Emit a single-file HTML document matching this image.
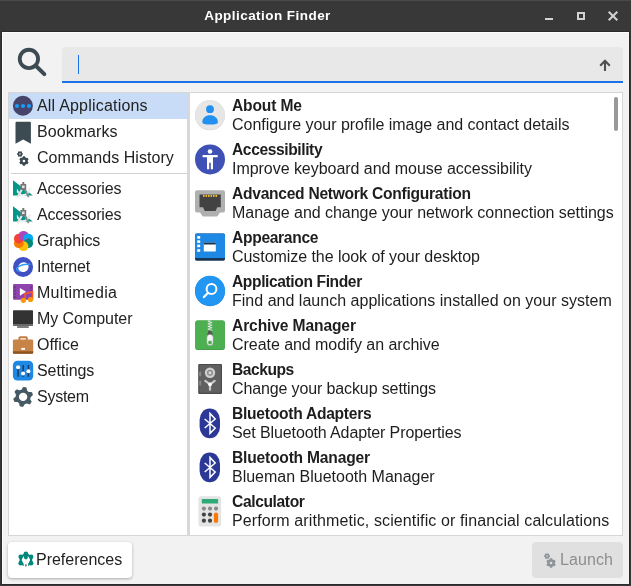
<!DOCTYPE html>
<html><head><meta charset="utf-8">
<style>
*{box-sizing:border-box;margin:0;padding:0}
html,body{width:631px;height:586px;overflow:hidden;background:#383838;font-family:"Liberation Sans",sans-serif;}
#win{position:absolute;left:0;top:0;width:631px;height:586px;background:#383838;box-shadow:inset 0 1px 0 #4a4a4a}
#title{will-change:transform;position:absolute;left:0;top:0;width:535px;height:32px;line-height:31px;text-align:center;color:#fff;font-weight:bold;font-size:13.5px;letter-spacing:0.45px}
#content{position:absolute;left:2px;top:32px;width:627px;height:552px;background:#f2f2f2;outline:1px solid #2b2b2b;box-shadow:inset 1px 1px 0 #fdfdfd}
#entry{position:absolute;left:60px;top:15px;width:561px;height:36px;background:#e8e8e8;border-bottom:2px solid #1a73e8;border-radius:4px 4px 0 0}
#caret{position:absolute;left:16px;top:8px;width:1px;height:19px;background:#1a73e8}
#left{position:absolute;left:6px;top:60px;width:179px;height:444px;background:#fff;border:1px solid #d6d6d6;border-right:0}
#psep{position:absolute;left:185px;top:60px;width:3px;height:444px;background:#d8d8d8}
#right{position:absolute;left:188px;top:60px;width:433px;height:444px;background:#fff;border:1px solid #d6d6d6;border-left:0;overflow:hidden}
.cat{will-change:transform;position:absolute;left:0;width:178px;height:26px;line-height:26px;font-size:16px;color:#222;padding-left:28px;white-space:nowrap}
.cat.sel{background:#c8dcf8}
.cat svg{position:absolute;left:3px;top:2px;width:22px;height:22px}
.sep{position:absolute;left:2px;width:176px;top:80px;height:1px;background:#d2d2d2}
.app{will-change:transform;position:absolute;left:0;width:420px;height:44px;white-space:nowrap;color:#1e1e1e}
.app b{position:absolute;left:42px;top:3px;font-size:15.6px;line-height:19px}
.app span{position:absolute;left:42px;top:22px;font-size:16px;line-height:19px}
.app svg{position:absolute;left:4px;top:5px;width:32px;height:32px}
#sb{position:absolute;left:424px;top:4px;width:4px;height:34px;border-radius:2px;background:#999}
.btn{will-change:transform;position:absolute;top:510px;height:36px;border-radius:4px;font-size:16px;line-height:36px;white-space:nowrap}
#pref{left:6px;width:124px;background:#fff;box-shadow:0 1px 3px rgba(0,0,0,.3);color:#222;padding-left:28px}
#launch{left:530px;width:91px;background:#e0e0e0;color:#8e8e8e;padding-left:28px}
</style></head><body>
<div id="win">
<div id="title">Application Finder</div>
<svg style="position:absolute;left:540px;top:0" width="91" height="32" viewBox="540 0 91 32"><rect x="545" y="18" width="8" height="2" fill="#d2d2d2"/><rect x="578" y="13" width="6" height="6" fill="none" stroke="#d2d2d2" stroke-width="2"/><path d="M608.7 11.7l8.6 8.6M617.3 11.7l-8.6 8.6" stroke="#d2d2d2" stroke-width="2" fill="none"/></svg>
<div id="content">
<svg style="position:absolute;left:14px;top:14px" width="32" height="32" viewBox="16 46 32 32"><circle cx="28.9" cy="58.9" r="9.15" fill="none" stroke="#3c4a52" stroke-width="3.8"/><path d="M35.8 65.8l8.5 8.3" stroke="#3c4a52" stroke-width="4" stroke-linecap="round"/></svg>
<div id="entry"><div id="caret"></div>
<svg style="position:absolute;left:536px;top:9px" width="16" height="18" viewBox="598 56 16 18"><path d="M605 70.9V60.8M600.2 65.7L605 60.7L609.8 65.7" fill="none" stroke="#505050" stroke-width="2.1"/></svg>
</div>
<div id="left">
<div class="cat sel" id="c0" style="top:0;letter-spacing:0.198px">All Applications</div>
<div class="cat" id="c1" style="top:26px;letter-spacing:0.059px">Bookmarks</div>
<div class="cat" id="c2" style="top:52px;letter-spacing:0.050px">Commands History</div>
<div class="sep"></div>
<div class="cat" id="c3" style="top:83px;letter-spacing:-0.185px">Accessories</div>
<div class="cat" id="c4" style="top:109px;letter-spacing:-0.185px">Accessories</div>
<div class="cat" id="c5" style="top:135px;letter-spacing:-0.105px">Graphics</div>
<div class="cat" id="c6" style="top:161px;letter-spacing:-0.152px">Internet</div>
<div class="cat" id="c7" style="top:187px;letter-spacing:0.293px">Multimedia</div>
<div class="cat" id="c8" style="top:213px;letter-spacing:-0.054px">My Computer</div>
<div class="cat" id="c9" style="top:239px;letter-spacing:0.097px">Office</div>
<div class="cat" id="c10" style="top:265px;letter-spacing:-0.074px">Settings</div>
<div class="cat" id="c11" style="top:291px;letter-spacing:-0.249px">System</div>
</div>
<div id="psep"></div>
<div id="right">
<div class="app" style="top:0"><b id="b0" style="letter-spacing:-0.147px">About Me</b><span id="s0" style="letter-spacing:-0.031px">Configure your profile image and contact details</span></div>
<div class="app" style="top:44px"><b id="b1" style="letter-spacing:-0.396px">Accessibility</b><span id="s1" style="letter-spacing:-0.041px">Improve keyboard and mouse accessibility</span></div>
<div class="app" style="top:88px"><b id="b2" style="letter-spacing:-0.273px">Advanced Network Configuration</b><span id="s2" style="letter-spacing:-0.034px">Manage and change your network connection settings</span></div>
<div class="app" style="top:132px"><b id="b3" style="letter-spacing:-0.309px">Appearance</b><span id="s3" style="letter-spacing:-0.058px">Customize the look of your desktop</span></div>
<div class="app" style="top:176px"><b id="b4" style="letter-spacing:-0.393px">Application Finder</b><span id="s4" style="letter-spacing:0.017px">Find and launch applications installed on your system</span></div>
<div class="app" style="top:220px"><b id="b5" style="letter-spacing:-0.120px">Archive Manager</b><span id="s5" style="letter-spacing:-0.049px">Create and modify an archive</span></div>
<div class="app" style="top:264px"><b id="b6" style="letter-spacing:-0.468px">Backups</b><span id="s6" style="letter-spacing:-0.125px">Change your backup settings</span></div>
<div class="app" style="top:308px"><b id="b7" style="letter-spacing:-0.259px">Bluetooth Adapters</b><span id="s7" style="letter-spacing:-0.114px">Set Bluetooth Adapter Properties</span></div>
<div class="app" style="top:352px"><b id="b8" style="letter-spacing:-0.201px">Bluetooth Manager</b><span id="s8" style="letter-spacing:-0.004px">Blueman Bluetooth Manager</span></div>
<div class="app" style="top:396px"><b id="b9" style="letter-spacing:-0.373px">Calculator</b><span id="s9" style="letter-spacing:0.116px">Perform arithmetic, scientific or financial calculations</span></div>
<div id="sb"></div>
</div>
<div class="btn" id="pref" style="letter-spacing:-0.008px">Preferences</div>
<div class="btn" id="launch" style="letter-spacing:0.100px">Launch</div>
</div>
<svg id="icons" style="position:absolute;left:0;top:0;pointer-events:none" width="631" height="586" viewBox="0 0 631 586">
<!--L-->
<circle cx="22.9" cy="105.8" r="10" fill="#46446a"/><circle cx="17" cy="106" r="2.1" fill="#1a9cf5"/><circle cx="23" cy="106" r="2.1" fill="#1a9cf5"/><circle cx="29" cy="106" r="2.1" fill="#1a9cf5"/>
<path fill="#3c4a52" d="M15.5 122.7a1 1 0 0 1 1-1h13.4a1 1 0 0 1 1 1V143.7L23.2 139.6L15.5 143.7Z"/>
<path fill-rule="evenodd" fill="#3c4a52" d="M22.14 153.16 L22.85 153.22 L22.85 154.78 L22.14 154.84 L21.78 155.48 L22.07 156.12 L20.73 156.90 L20.32 156.32 L19.58 156.32 L19.17 156.90 L17.83 156.12 L18.12 155.48 L17.76 154.84 L17.05 154.78 L17.05 153.22 L17.76 153.16 L18.12 152.52 L17.83 151.88 L19.17 151.10 L19.58 151.68 L20.32 151.68 L20.73 151.10 L22.07 151.88 L21.78 152.52Z M19.15 154.00 a0.80 0.80 0 1 0 1.60 0 a0.80 0.80 0 1 0 -1.60 0Z"/><path fill-rule="evenodd" fill="#3c4a52" d="M25.17 164.71 L25.01 165.68 L22.89 165.68 L22.73 164.71 L21.31 163.89 L20.38 164.23 L19.32 162.40 L20.09 161.77 L20.09 160.13 L19.32 159.50 L20.38 157.67 L21.31 158.01 L22.73 157.19 L22.89 156.22 L25.01 156.22 L25.17 157.19 L26.59 158.01 L27.52 157.67 L28.58 159.50 L27.81 160.13 L27.81 161.77 L28.58 162.40 L27.52 164.23 L26.59 163.89Z M22.65 160.95 a1.30 1.30 0 1 0 2.60 0 a1.30 1.30 0 1 0 -2.60 0Z"/>
<path fill="#009688" fill-rule="evenodd" d="M13 180.2 V195.6 H32.8Z M16.9 188.6 V192.8 H19.6Z"/><path d="M18 193.7 Q23 196.9 28.2 193.3" fill="none" stroke="#f2f2f2" stroke-width="1.9"/><path d="M21.8 189.5 L17.6 197.4" stroke="#e6e6e6" stroke-width="2.1"/><path d="M30.6 188.2 L26.4 194.2" stroke="#ececec" stroke-width="2"/><path d="M24.8 189.5 L28.6 197.2" stroke="#8a8a8a" stroke-width="1.7"/><rect x="22.3" y="182.0" width="2" height="2.4" fill="#757575"/><rect x="20.4" y="184.0" width="5.8" height="5.9" fill="#757575"/><rect x="22" y="185.5" width="2.6" height="2.6" fill="#e0e0e0"/>
<path fill="#009688" fill-rule="evenodd" d="M13 206.2 V221.6 H32.8Z M16.9 214.6 V218.8 H19.6Z"/><path d="M18 219.7 Q23 222.9 28.2 219.3" fill="none" stroke="#f2f2f2" stroke-width="1.9"/><path d="M21.8 215.5 L17.6 223.4" stroke="#e6e6e6" stroke-width="2.1"/><path d="M30.6 214.2 L26.4 220.2" stroke="#ececec" stroke-width="2"/><path d="M24.8 215.5 L28.6 223.2" stroke="#8a8a8a" stroke-width="1.7"/><rect x="22.3" y="208.0" width="2" height="2.4" fill="#757575"/><rect x="20.4" y="210.0" width="5.8" height="5.9" fill="#757575"/><rect x="22" y="211.5" width="2.6" height="2.6" fill="#e0e0e0"/>
<circle cx="28.15" cy="238.60" r="4.9" fill="#03a9f4"/><circle cx="28.15" cy="243.20" r="4.9" fill="#00897b"/><circle cx="23.50" cy="246.20" r="4.9" fill="#ffc107"/><circle cx="18.85" cy="243.20" r="4.9" fill="#f57c00"/><circle cx="18.85" cy="238.60" r="4.9" fill="#f44336"/><circle cx="23.50" cy="235.80" r="4.9" fill="#ab47bc"/><clipPath id="fl"><path clip-rule="evenodd" d="M10 228h28v28h-28z M23.25 243.20 a4.9 4.9 0 1 0 9.8 0 a4.9 4.9 0 1 0 -9.8 0z"/></clipPath><circle cx="28.15" cy="238.6" r="4.9" fill="#03a9f4" clip-path="url(#fl)"/>
<circle cx="23.05" cy="267" r="10.05" fill="#3f50c4"/><ellipse cx="23.4" cy="267.2" rx="5.3" ry="4.8" transform="rotate(-25 23.4 267.2)" fill="#fff"/><path d="M30 264.3 Q22.4 263.6 18 267 Q15.6 269 17.2 270.1 Q18.4 270.9 19.6 271.4" fill="none" stroke="#2f9bf2" stroke-width="1.4" stroke-linecap="round"/>
<rect x="13" y="284" width="20" height="15.8" rx="1.2" fill="#8e44ad"/><rect x="14" y="286.6" width="1.8" height="1.8" rx="0.4" fill="#6c3483"/><rect x="14" y="289.8" width="1.8" height="1.8" rx="0.4" fill="#6c3483"/><rect x="14" y="293.0" width="1.8" height="1.8" rx="0.4" fill="#6c3483"/><rect x="14" y="296.2" width="1.8" height="1.8" rx="0.4" fill="#6c3483"/><rect x="30.1" y="286.6" width="1.8" height="1.8" rx="0.4" fill="#6c3483"/><rect x="30.1" y="289.8" width="1.8" height="1.8" rx="0.4" fill="#6c3483"/><path d="M19.9 288V295.7L26.1 291.8Z" fill="#fff"/><path d="M25.1 300V293.9L32.5 291.6V299.4" fill="none" stroke="#ff5722" stroke-width="1.6"/><circle cx="23.4" cy="300.3" r="2.6" fill="#ff9800"/><circle cx="30.5" cy="299.5" r="2.6" fill="#ff9800"/>
<rect x="13" y="310.3" width="20" height="14.2" rx="0.8" fill="#333"/><rect x="13" y="324.3" width="20" height="1.6" fill="#5a5a5a"/><rect x="17" y="325.9" width="11.8" height="2" rx="0.5" fill="#808080"/>
<rect x="19.4" y="337.2" width="7.4" height="4" rx="0.8" fill="none" stroke="#c17c40" stroke-width="1.9"/><rect x="12.9" y="339.5" width="20.3" height="14.3" rx="1.2" fill="#c88446"/><path d="M12.9 351.2h20.3v1.4a1.2 1.2 0 0 1-1.2 1.2h-17.9a1.2 1.2 0 0 1-1.2-1.2z" fill="#8d5524"/><rect x="21.3" y="347.9" width="3.7" height="1.9" fill="#fff"/>
<rect x="12.9" y="360.7" width="20.3" height="19.9" rx="4.5" fill="#1e88e5"/><rect x="17.30" y="365" width="1.5" height="11.8" fill="#1b3a5e"/><rect x="22.35" y="365" width="1.5" height="11.8" fill="#1b3a5e"/><rect x="27.65" y="365" width="1.5" height="11.8" fill="#1b3a5e"/><circle cx="18.05" cy="367.2" r="2" fill="#fff"/><circle cx="23.1" cy="373.4" r="2" fill="#fff"/><circle cx="28.4" cy="371.2" r="2" fill="#fff"/>
<path stroke="#455a64" stroke-width="2.2" stroke-linejoin="round" fill-rule="evenodd" fill="#455a64" d="M22.33 390.45 L23.72 388.02 L25.55 388.34 L26.03 391.10 L28.30 393.01 L31.10 393.00 L31.74 394.75 L29.59 396.54 L29.07 399.46 L30.48 401.88 L29.28 403.30 L26.66 402.34 L23.87 403.35 L22.48 405.78 L20.65 405.46 L20.17 402.70 L17.90 400.79 L15.10 400.80 L14.46 399.05 L16.61 397.26 L17.13 394.34 L15.72 391.92 L16.92 390.50 L19.54 391.46Z M17.80 396.90 a5.30 5.30 0 1 0 10.60 0 a5.30 5.30 0 1 0 -10.60 0Z"/>
<!--R-->
<circle cx="210" cy="115.3" r="15" fill="#d0d0d0"/><circle cx="210" cy="115" r="15" fill="#e6e6e6"/><circle cx="210" cy="109.2" r="3.9" fill="#2190f0"/><path d="M202.3 122.2c0-4.2 3.4-6.9 7.7-6.9s7.9 2.7 7.9 6.9c0 1.6-3 2.4-7.8 2.4s-7.8-.8-7.8-2.4z" fill="#2190f0"/>
<circle cx="210" cy="159.4" r="15" fill="#3f51b5"/><circle cx="210" cy="151.5" r="2.3" fill="#fff"/><path d="M202.6 155h15.1v2.3h-4.7v12h-2.2v-6.6h-1.6v6.6h-2.2v-12h-4.4z" fill="#fff"/>
<path d="M197 190.2h26a2 2 0 0 1 2 2v18.3a2 2 0 0 1-2 2h-3l-2.2 3.2a1.6 1.6 0 0 1-1.3.7h-13a1.6 1.6 0 0 1-1.3-.7l-2.2-3.2h-3a2 2 0 0 1-2-2v-18.3a2 2 0 0 1 2-2z" fill="#b0b0b0"/><path d="M199.5 194.5h21.3v12.7h-3.6l-1.6 3.8h-10.9l-1.6-3.8h-3.6z" fill="#424242"/><rect x="203.0" y="194.9" width="1.6" height="1.9" fill="#fbc02d"/><rect x="205.5" y="194.9" width="1.6" height="1.9" fill="#fbc02d"/><rect x="208.0" y="194.9" width="1.6" height="1.9" fill="#fbc02d"/><rect x="210.5" y="194.9" width="1.6" height="1.9" fill="#fbc02d"/><rect x="213.0" y="194.9" width="1.6" height="1.9" fill="#fbc02d"/><rect x="215.5" y="194.9" width="1.6" height="1.9" fill="#fbc02d"/>
<rect x="195" y="233.6" width="30" height="27.1" rx="1.6" fill="#1a3553"/><path d="M196.6 233.6h26.8a1.6 1.6 0 0 1 1.6 1.6v22.7h-30v-22.7a1.6 1.6 0 0 1 1.6-1.6z" fill="#1e88e5"/><rect x="197.2" y="236.1" width="3" height="2.6" fill="#fff"/><rect x="197.2" y="240.3" width="3" height="2.6" fill="#fff"/><rect x="197.2" y="244.6" width="3" height="2.6" fill="#fff"/><rect x="197.2" y="249.2" width="3" height="2.6" fill="#fff"/><rect x="203.8" y="242.5" width="12" height="9" rx="0.6" fill="#fff"/><path d="M203.8 243.1a.6.6 0 0 1 .6-.6h10.8a.6.6 0 0 1 .6.6v1.3h-12z" fill="#1a3553"/>
<circle cx="210" cy="291.2" r="15" fill="#1976d2"/><circle cx="210" cy="290.8" r="15" fill="#2196f3"/><circle cx="211.5" cy="289" r="4.9" fill="none" stroke="#fff" stroke-width="2"/><path d="M207.9 292.9L203.9 297.1" stroke="#fff" stroke-width="2.2" stroke-linecap="round"/>
<rect x="195.3" y="320.6" width="29.5" height="29.4" rx="2.2" fill="#3d9141"/><rect x="195.3" y="320.5" width="29.5" height="28.9" rx="2.2" fill="#4caf50"/><rect x="207.8" y="320.6" width="2.6" height="1.3" fill="#f0f0f0"/><rect x="209.6" y="321.9" width="2.6" height="1.3" fill="#e0e0e0"/><rect x="207.8" y="323.2" width="2.6" height="1.3" fill="#f0f0f0"/><rect x="209.6" y="324.5" width="2.6" height="1.3" fill="#e0e0e0"/><rect x="207.8" y="325.8" width="2.6" height="1.3" fill="#f0f0f0"/><rect x="209.6" y="327.1" width="2.6" height="1.3" fill="#e0e0e0"/><rect x="207.8" y="328.4" width="2.6" height="1.3" fill="#f0f0f0"/><rect x="209.6" y="329.7" width="2.6" height="1.3" fill="#e0e0e0"/><path d="M208.6 330.6h2.8l1.6 4.6h-6z" fill="#555"/><rect x="206.9" y="334.4" width="6.2" height="11.2" rx="3" fill="#f5f5f5" stroke="#9e9e9e" stroke-width="0.6"/><circle cx="210" cy="342.5" r="1.9" fill="#4caf50"/>
<rect x="198.2" y="363.9" width="23.8" height="30" rx="1.2" fill="#4a4a4a"/><rect x="199.4" y="365.1" width="21.4" height="27.6" rx="0.6" fill="#606060"/><rect x="199.2" y="371.6" width="1.9" height="4.6" rx="0.5" fill="#8a8a8a"/><rect x="199.2" y="380.8" width="1.9" height="4.6" rx="0.5" fill="#8a8a8a"/><circle cx="210" cy="372.8" r="5.2" fill="#cfcfcf"/><circle cx="210" cy="372.8" r="3" fill="#888"/><rect x="208.6" y="371.4" width="2.8" height="2.8" fill="#d8d8d8"/><path d="M210 384.4L205.3 380.9M210 384.4L214.7 380.9M210 384.4V389.8" stroke="#c8c8c8" stroke-width="2.2" stroke-linecap="round"/><circle cx="210" cy="384.3" r="1.9" fill="#fff"/>
<rect x="199.6" y="408.5" width="20.4" height="29.8" rx="10.2" ry="11.2" fill="#2b3896"/><path d="M204.7 419.0 L215.2 428.0 L210 433.3 V413.4 L215.2 419.0 L204.7 428.0" fill="none" stroke="#fff" stroke-width="1.5" stroke-linejoin="miter"/>
<rect x="199.6" y="452.5" width="20.4" height="29.8" rx="10.2" ry="11.2" fill="#2b3896"/><path d="M204.7 463.0 L215.2 472.0 L210 477.3 V457.4 L215.2 463.0 L204.7 472.0" fill="none" stroke="#fff" stroke-width="1.5" stroke-linejoin="miter"/>
<rect x="198.5" y="496.2" width="22.6" height="30.4" rx="2.6" fill="#e4e4e4"/><rect x="201.8" y="499" width="16.3" height="4.6" rx="0.6" fill="#2eaa76"/><circle cx="203.9" cy="508.6" r="2.1" fill="#8a8a8a"/><circle cx="210.0" cy="508.6" r="2.1" fill="#8a8a8a"/><circle cx="216.0" cy="508.6" r="2.1" fill="#8a8a8a"/><circle cx="203.9" cy="514.6" r="2.1" fill="#444"/><circle cx="210.0" cy="514.6" r="2.1" fill="#444"/><circle cx="203.9" cy="520.7" r="2.1" fill="#444"/><circle cx="210.0" cy="520.7" r="2.1" fill="#444"/><rect x="213.9" y="512.5" width="4.2" height="10.6" rx="2.1" fill="#ff7800"/>
<!--B-->
<circle cx="25.9" cy="560.0" r="5.25" fill="none" stroke="#00897b" stroke-width="2.3"/><circle cx="25.90" cy="553.70" r="2.3" fill="#00897b"/><circle cx="31.10" cy="556.85" r="2.3" fill="#00897b"/><circle cx="31.10" cy="563.15" r="2.3" fill="#00897b"/><circle cx="20.70" cy="563.15" r="2.3" fill="#00897b"/><circle cx="20.70" cy="556.85" r="2.3" fill="#00897b"/><rect x="24" y="552.4" width="3.8" height="7.0" rx="1.8" fill="#00897b"/><rect x="23.7" y="562.6" width="4.4" height="5" fill="#fff"/><rect x="25" y="564.4" width="1.8" height="2" fill="#777"/>
<path fill-rule="evenodd" fill="#8a949a" d="M549.24 555.26 L549.95 555.32 L549.95 556.88 L549.24 556.94 L548.88 557.58 L549.17 558.22 L547.83 559.00 L547.42 558.42 L546.68 558.42 L546.27 559.00 L544.93 558.22 L545.22 557.58 L544.86 556.94 L544.15 556.88 L544.15 555.32 L544.86 555.26 L545.22 554.62 L544.93 553.98 L546.27 553.20 L546.68 553.78 L547.42 553.78 L547.83 553.20 L549.17 553.98 L548.88 554.62Z M546.25 556.10 a0.80 0.80 0 1 0 1.60 0 a0.80 0.80 0 1 0 -1.60 0Z"/><path fill-rule="evenodd" fill="#8a949a" d="M552.27 566.81 L552.11 567.78 L549.99 567.78 L549.83 566.81 L548.41 565.99 L547.48 566.33 L546.42 564.50 L547.19 563.87 L547.19 562.23 L546.42 561.60 L547.48 559.77 L548.41 560.11 L549.83 559.29 L549.99 558.32 L552.11 558.32 L552.27 559.29 L553.69 560.11 L554.62 559.77 L555.68 561.60 L554.91 562.23 L554.91 563.87 L555.68 564.50 L554.62 566.33 L553.69 565.99Z M549.75 563.05 a1.30 1.30 0 1 0 2.60 0 a1.30 1.30 0 1 0 -2.60 0Z"/>
<!--E-->
</svg>
</div>
</body></html>
